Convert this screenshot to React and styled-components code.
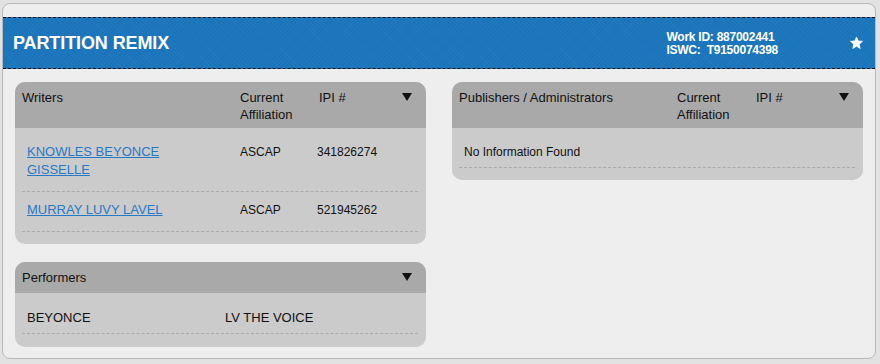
import React from 'react';
import styled, { createGlobalStyle } from 'styled-components';

const GlobalStyle = createGlobalStyle`
  html, body {
    margin: 0;
    padding: 0;
    background: #e2e2e2;
    font-family: "Liberation Sans", Arial, Helvetica, sans-serif;
    color: #111;
  }
  #root {
    padding: 3px 4px 6px 2px;
  }
`;

const Card = styled.div`
  width: 874px;
  height: 356px;
  box-sizing: border-box;
  background: #eeeeee;
  border: 1px solid #b9b9b9;
  border-radius: 8px;
  padding-top: 13px;
  overflow: hidden;
`;

const Banner = styled.div`
  height: 52px;
  box-sizing: border-box;
  border-top: 1px dashed #111;
  border-bottom: 1px dashed #111;
  background-color: #1b76bc;
  background-image:
    repeating-linear-gradient(45deg, rgba(255,255,255,0.025) 0 1px, transparent 1px 3px),
    repeating-linear-gradient(-45deg, rgba(0,0,0,0.025) 0 1px, transparent 1px 3px);
  display: flex;
  align-items: center;
  padding: 0 12px 0 10px;
  color: #fff;
`;

const Title = styled.h1`
  margin: 0;
  flex: 1;
  font-size: 18px;
  font-weight: bold;
  letter-spacing: -0.1px;
`;

const Ids = styled.div`
  font-size: 12px;
  font-weight: bold;
  line-height: 13px;
  letter-spacing: -0.25px;
  margin-right: 72px;
  margin-top: 2px;
`;

const Columns = styled.div`
  display: grid;
  grid-template-columns: 411px 411px;
  column-gap: 26px;
  align-items: start;
  padding: 13px 13px 0 12px;
`;

const Stack = styled.div`
  display: flex;
  flex-direction: column;
  gap: 18px;
`;

const Panel = styled.section`
  border-radius: 10px;
  overflow: hidden;
  background: #cbcbcb;
`;

const PanelHead = styled.div`
  display: grid;
  grid-template-columns: ${(p) => p.$cols};
  align-items: start;
  background: #a9a9a9;
  font-size: 13px;
  line-height: 17px;
  padding: 7px 14px ${(p) => (p.$tall ? '5px' : '7px')} 7px;
  min-height: ${(p) => (p.$tall ? '34px' : '17px')};
`;

const HeadCell = styled.div``;

const Caret = styled.svg`
  justify-self: end;
  margin-top: 4px;
`;

const PanelBody = styled.div`
  padding: 6px 8px ${(p) => p.$bottom || '12px'} 7px;
`;

const Row = styled.div`
  display: grid;
  grid-template-columns: ${(p) => p.$cols};
  align-items: start;
  padding: ${(p) => p.$pad || '9px 0 6px 5px'};
  border-bottom: 1px dashed #aaa;
  font-size: 12px;
  line-height: 18px;
`;

const NameLink = styled.a`
  color: #2879c4;
  font-size: 13px;
  text-decoration: underline;
  padding-right: 40px;
`;

const Cell = styled.div`
  font-size: ${(p) => p.$size || '12px'};
`;

const Triangle = () => (
  <Caret width="10" height="8" viewBox="0 0 10 8">
    <polygon points="0,0 10,0 5,8" fill="#111" />
  </Caret>
);

const Star = () => (
  <svg width="13" height="12" viewBox="0 0 24 23">
    <path
      d="M12 0 L15.2 7.6 L23.5 8.3 L17.2 13.8 L19.1 22 L12 17.6 L4.9 22 L6.8 13.8 L0.5 8.3 L8.8 7.6 Z"
      fill="#fff"
      stroke="#fff"
      strokeWidth="1.5"
      strokeLinejoin="round"
    />
  </svg>
);

const writers = [
  { name: 'KNOWLES BEYONCE GISSELLE', soc: 'ASCAP', ipi: '341826274' },
  { name: 'MURRAY LUVY LAVEL', soc: 'ASCAP', ipi: '521945262' },
];

const colsHead = '218px 79px 1fr auto';
const colsRow = '213px 77px 1fr';

export default function App() {
  return (
    <>
      <GlobalStyle />
      <Card>
        <Banner>
          <Title>PARTITION REMIX</Title>
          <Ids>
            <div>Work ID: 887002441</div>
            <div>ISWC:&nbsp; T9150074398</div>
          </Ids>
          <Star />
        </Banner>
        <Columns>
          <Stack>
            <Panel>
              <PanelHead $cols={colsHead} $tall>
                <HeadCell>Writers</HeadCell>
                <HeadCell>Current<br />Affiliation</HeadCell>
                <HeadCell>IPI #</HeadCell>
                <Triangle />
              </PanelHead>
              <PanelBody>
                {writers.map((w) => (
                  <Row key={w.ipi} $cols={colsRow} $pad="9px 0 12px 5px">
                    <div><NameLink href="#">{w.name}</NameLink></div>
                    <Cell>{w.soc}</Cell>
                    <Cell>{w.ipi}</Cell>
                  </Row>
                ))}
              </PanelBody>
            </Panel>
            <Panel>
              <PanelHead $cols="1fr auto">
                <HeadCell>Performers</HeadCell>
                <Triangle />
              </PanelHead>
              <PanelBody $bottom="13px">
                <Row $cols="198px 1fr" $pad="10px 0 6px 5px">
                  <Cell $size="13px">BEYONCE</Cell>
                  <Cell $size="13px">LV THE VOICE</Cell>
                </Row>
              </PanelBody>
            </Panel>
          </Stack>
          <Panel>
            <PanelHead $cols={colsHead} $tall>
              <HeadCell>Publishers / Administrators</HeadCell>
              <HeadCell>Current<br />Affiliation</HeadCell>
              <HeadCell>IPI #</HeadCell>
              <Triangle />
            </PanelHead>
            <PanelBody>
              <Row $cols="1fr">
                <Cell>No Information Found</Cell>
              </Row>
            </PanelBody>
          </Panel>
        </Columns>
      </Card>
    </>
  );
}
